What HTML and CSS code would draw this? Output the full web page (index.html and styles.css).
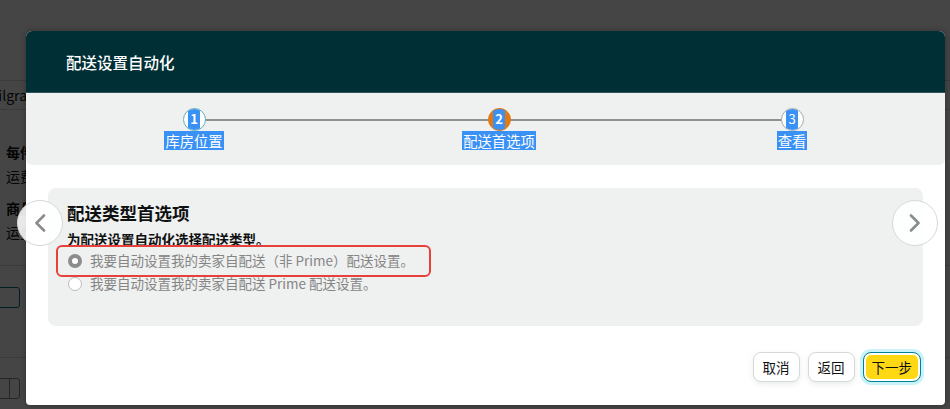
FILE: index.html
```html
<!doctype html>
<html>

<head>
	<title>配送设置自动化</title>
	<link rel="stylesheet" href="styles.css">
</head>

<body>
	<!-- page under the dialog -->
	<div class="page">
		<div class="page-tabs"><span class="page-tab">Milgram</span></div>
		<div class="page-fields">
			<div class="page-field"><b>每件商品</b><span>运费</span></div>
			<div class="page-field"><b>商品价格</b><span>运费</span></div>
		</div>
		<div class="page-row"><span class="page-box"></span></div>
		<div class="page-row page-row-last"><span class="page-toggle"><i></i></span></div>
	</div>
	<div class="overlay"></div>

	<!-- shipping automation dialog -->
	<div class="modal">
		<div class="modal-header">
			<h1>配送设置自动化</h1>
		</div>

		<div class="stepper">
			<div class="step step-1 done">
				<span class="step-num"><span class="sel">1</span></span>
				<span class="step-label sel">库房位置</span>
			</div>
			<div class="step step-2 current">
				<span class="step-num"><span class="sel">2</span></span>
				<span class="step-label sel">配送首选项</span>
			</div>
			<div class="step step-3">
				<span class="step-num"><span class="sel">3</span></span>
				<span class="step-label sel">查看</span>
			</div>
		</div>

		<div class="modal-body">
			<button class="nav-arrow nav-prev">
				<svg width="12" height="18" viewBox="0 0 12 18"><path d="M10 1.5 2.5 9l7.5 7.5" fill="none" stroke="#8a8d8d" stroke-width="2.6" stroke-linecap="round" stroke-linejoin="round"/></svg>
			</button>
			<section class="card">
				<h2>配送类型首选项</h2>
				<p class="card-sub">为配送设置自动化选择配送类型。</p>
				<div class="choices">
					<label class="choice marked"><span class="radio checked"></span>我要自动设置我的卖家自配送（非 Prime）配送设置。</label>
					<label class="choice"><span class="radio"></span>我要自动设置我的卖家自配送 Prime 配送设置。</label>
				</div>
			</section>
			<button class="nav-arrow nav-next">
				<svg width="12" height="18" viewBox="0 0 12 18"><path d="M2 1.5 9.5 9 2 16.5" fill="none" stroke="#8a8d8d" stroke-width="2.6" stroke-linecap="round" stroke-linejoin="round"/></svg>
			</button>
		</div>

		<div class="modal-footer">
			<button class="btn">取消</button>
			<button class="btn">返回</button>
			<button class="btn btn-primary">下一步</button>
		</div>
	</div>
</body>

</html>
```

FILE: styles.css
```css
* { margin: 0; padding: 0; box-sizing: border-box; }
body { width: 950px; height: 409px; overflow: hidden; position: relative; background: #fff; font-family: 'Noto Sans CJK SC', 'Noto Sans', sans-serif; color: #0f1111; }

/* page behind the overlay */
.page { padding-top: 80px; font-size: 14px; }
.page-tabs { height: 30px; border-top: 1px solid #d5d9d9; border-bottom: 1px solid #d5d9d9; line-height: 28px; overflow: hidden; white-space: nowrap; }
.page-tab { display: inline-block; margin-left: -13px; }
.page-fields { padding: 30px 0 21px; border-bottom: 1px solid #d5d9d9; }
.page-field { display: flex; flex-direction: column; line-height: 24px; margin-left: 6px; margin-bottom: 8px; }
.page-field:last-child { margin-bottom: 0; }
.page-row { padding: 21px 0 49px; border-bottom: 1px solid #d5d9d9; }
.page-row-last { padding: 20px 0; border-bottom: none; }
.page-box { display: block; width: 22px; height: 21px; margin-left: -2px; border: 1px solid #007185; border-radius: 3px; }
.page-toggle { display: block; width: 22px; height: 21px; margin-left: -2px; border: 1px solid #888c8c; border-radius: 3px; }
.page-toggle i { display: block; width: 1px; height: 100%; margin-left: 10px; background: #888c8c; }
.overlay { position: absolute; inset: 0; background: rgba(0, 0, 0, 0.73); }

/* dialog */
.modal { position: absolute; left: 26px; top: 31px; width: 919px; height: 374px; background: #fff; border-radius: 6px 6px 4px 4px; box-shadow: 0 0 6px rgba(0, 0, 0, 0.3); }
.modal-header { height: 62px; background: #002f36; border-radius: 6px 6px 0 0; border-bottom: 1px solid #2a565c; padding-left: 40px; display: flex; align-items: center; }
.modal-header h1 { font-size: 15.5px; font-weight: 500; color: #fff; }

/* steps */
.stepper { position: relative; height: 72px; background: #eff0f0; border-radius: 0 0 6px 6px; display: grid; grid-template-columns: 80px 225px 80px 213px 80px; padding: 15px 0 0 128px; }
.stepper::before { content: ''; position: absolute; left: 168px; right: 153px; top: 26px; height: 1.5px; background: #8d9090; }
.step { position: relative; display: flex; flex-direction: column; align-items: center; }
.step-1 { grid-column: 1; }
.step-2 { grid-column: 3; }
.step-3 { grid-column: 5; }
.step-num { width: 23px; height: 23px; border-radius: 50%; background: #fff; border: 1.5px solid #a6a9a9; display: flex; justify-content: center; overflow: hidden; font-size: 13px; font-weight: 700; line-height: 20px; }
.step.done .step-num { border-color: #5fb0b4; }
.step.current .step-num { background: #e47911; border-color: #e47911; }
.step-num .sel { padding: 0 2px; }
.step-3 .step-num { font-weight: 400; }
.sel { background: #3990f5; color: #fff; }
.step-label { font-size: 14.3px; line-height: 19px; white-space: nowrap; padding: 0 1px; }

/* body with card */
.modal-body { position: relative; padding: 23px 22px 0; }
.card { height: 138px; background: #eff0f0; border-radius: 8px; padding: 13px 19px 0; }
.card h2 { font-size: 17.5px; font-weight: 700; line-height: 24px; }
.card-sub { font-size: 13.5px; font-weight: 700; line-height: 20px; margin-top: 4px; }
.choices { display: flex; flex-direction: column; align-items: flex-start; }
.choice { position: relative; display: inline-flex; align-items: center; gap: 8px; font-size: 13.5px; line-height: 23px; color: #858585; padding-left: 1px; }
.choice.marked::after { content: ''; position: absolute; top: -4px; bottom: -5px; left: -11px; right: -17px; border: 2.5px solid #e8413b; border-radius: 6px; }
.radio { width: 14px; height: 14px; border-radius: 50%; background: #fff; border: 1px solid #b9bcbc; }
.radio.checked { border: 4.5px solid #8c8c8c; }

.nav-arrow { position: absolute; top: 35px; width: 46px; height: 46px; border-radius: 50%; background: rgba(255, 255, 255, 0.88); border: 1px solid #d5d9d9; display: flex; align-items: center; justify-content: center; }
.nav-prev { left: -9px; }
.nav-next { right: 7px; }

/* footer buttons */
.modal-footer { display: flex; justify-content: flex-end; gap: 8px; padding: 26px 24px 0; }
.btn { height: 30px; padding: 0 9px; border: 1px solid #d5d9d9; border-radius: 8px; background: #fff; font-family: inherit; font-size: 13.5px; color: #0f1111; box-shadow: 0 2px 5px rgba(213, 217, 217, 0.5); }
.btn-primary { background: #ffd814; border-color: #008296; box-shadow: 0 0 0 3px #c8f3fa, inset 0 0 0 2px #fff; padding: 0 8px; }
```
